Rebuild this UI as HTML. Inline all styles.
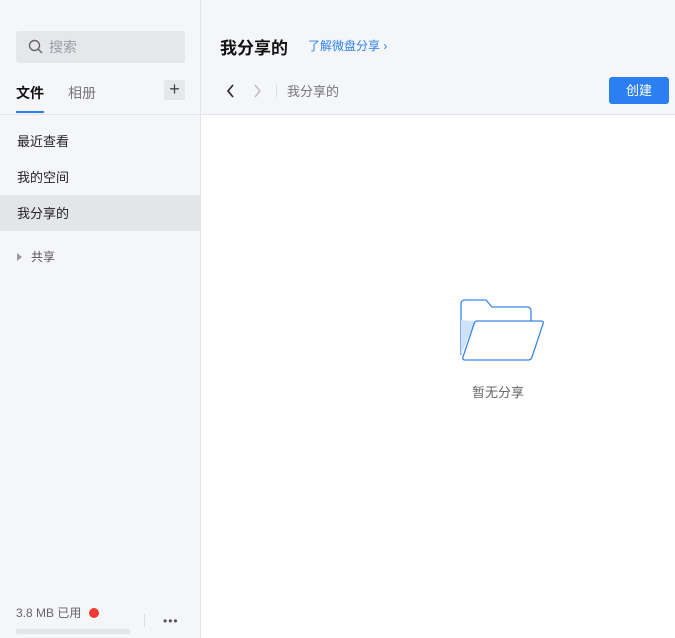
<!DOCTYPE html>
<html><head><meta charset="utf-8"><style>
*{margin:0;padding:0;box-sizing:border-box}
body{width:675px;height:638px;overflow:hidden;font-family:"Liberation Sans","Noto Sans CJK SC",sans-serif;background:#fff;position:relative;color:#222}
.side{position:absolute;left:0;top:0;width:201px;height:638px;background:#f5f6fa;border-right:1px solid #e3e5ea}
.abs{position:absolute}
.hdr{position:absolute;left:201px;top:0;right:0;height:115px;background:#f5f6fa;border-bottom:1px solid #e3e5ea}
</style></head><body>
<div class="side">
  <div class="abs" style="left:16px;top:31px;width:169px;height:32px;background:#e5e7ea;border-radius:3px"></div>
  <svg class="abs" style="left:28px;top:39px" width="16" height="16"><circle cx="6.5" cy="6.5" r="5" fill="none" stroke="#666" stroke-width="1.4"/><path d="M10 10l4 4" stroke="#666" stroke-width="1.4"/></svg>
  <div class="abs" style="left:49px;top:37px;font-size:14px;color:#9a9ea6">搜索</div>
  <div class="abs" style="left:16px;top:83px;font-size:14px;font-weight:bold;color:#111">文件</div>
  <div class="abs" style="left:16px;top:111px;width:28px;height:2px;background:#2b7ff0"></div>
  <div class="abs" style="left:68px;top:83px;font-size:14px;color:#777">相册</div>
  <div class="abs" style="left:164px;top:80px;width:21px;height:20px;background:#e5e7ea;border-radius:2px;font-size:18px;line-height:19px;text-align:center;color:#444">+</div>
  <div class="abs" style="left:0;top:114px;width:200px;height:1px;background:#e3e5ea"></div>
  <div class="abs" style="left:17px;top:131px;font-size:13px">最近查看</div>
  <div class="abs" style="left:17px;top:167px;font-size:13px">我的空间</div>
  <div class="abs" style="left:0;top:195px;width:200px;height:36px;background:#e3e5e9"></div>
  <div class="abs" style="left:17px;top:203px;font-size:13px">我分享的</div>
  <div class="abs" style="left:17px;top:253px;width:0;height:0;border-left:5px solid #999;border-top:4px solid transparent;border-bottom:4px solid transparent"></div>
  <div class="abs" style="left:31px;top:248px;font-size:12px;color:#555">共享</div>
  <div class="abs" style="left:16px;top:604px;font-size:12px;color:#666">3.8 MB 已用</div>
  <div class="abs" style="left:89px;top:608px;width:10px;height:10px;border-radius:50%;background:#ee3b33"></div>
  <div class="abs" style="left:16px;top:629px;width:114px;height:5px;background:#e3e5e9;border-radius:2px"></div>
  <div class="abs" style="left:144px;top:614px;width:1px;height:13px;background:#ddd"></div>
  <div class="abs" style="left:163px;top:614px;font-size:12px;color:#555;letter-spacing:1px">•••</div>
</div>
<div class="hdr">
  <div class="abs" style="left:19px;top:34px;font-size:17px;font-weight:bold;color:#111">我分享的</div>
  <div class="abs" style="left:107px;top:37px;font-size:12px;color:#2b7ff0">了解微盘分享 ›</div>
  <svg class="abs" style="left:24px;top:83px" width="40" height="16"><path d="M8 2l-5 6 5 6" fill="none" stroke="#222" stroke-width="1.6"/><path d="M30 2l5 6-5 6" fill="none" stroke="#bbb" stroke-width="1.4"/></svg>
  <div class="abs" style="left:75px;top:84px;width:1px;height:13px;background:#ddd"></div>
  <div class="abs" style="left:86px;top:81px;font-size:13px;color:#777">我分享的</div>
  <div class="abs" style="left:408px;top:77px;width:60px;height:27px;background:#2b7ff0;border-radius:3px;color:#fff;font-size:13px;line-height:27px;text-align:center">创建</div>
</div>
<svg class="abs" style="left:455px;top:295px" width="95" height="72">
<path d="M6 60 L6 9 Q6 5 10 5 L31 5 L37 12 L72 12 Q76 12 76 16 L76 26" fill="#fff" stroke="#3b87f0" stroke-width="1.3"/>
<path d="M6 60 L6 25 L20 26 Z" fill="#cfe2fb"/>
<path d="M22 26 L86 26 Q89 26 88 29 L77 62 Q76 65 73 65 L10 65 Q7 65 8 62 L19 29 Q20 26 22 26 Z" fill="#fff" stroke="#3b87f0" stroke-width="1.3"/>
</svg>
<div class="abs" style="left:472px;top:382px;font-size:13px;color:#666">暂无分享</div>
</body></html>
